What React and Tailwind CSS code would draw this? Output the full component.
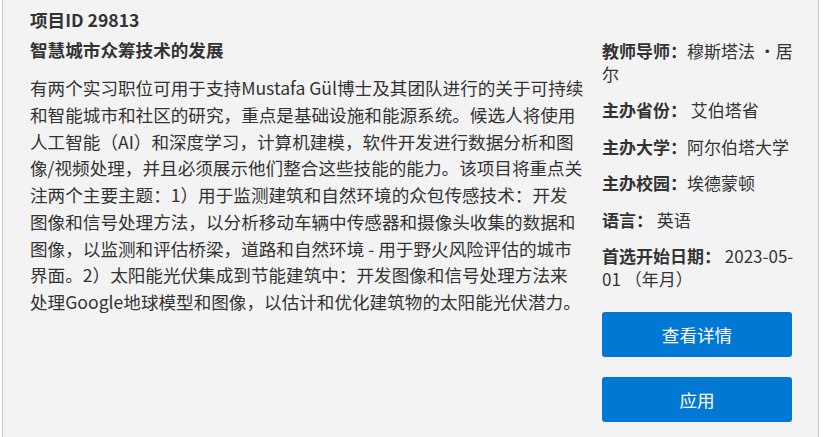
import React from 'react';

const project = {
  id: 29813,
  title: '智慧城市众筹技术的发展',
  // lines kept as in the source layout
  description: [
    '有两个实习职位可用于支持Mustafa Gül博士及其团队进行的关于可持续',
    '和智能城市和社区的研究，重点是基础设施和能源系统。候选人将使用',
    '人工智能（AI）和深度学习，计算机建模，软件开发进行数据分析和图',
    '像/视频处理，并且必须展示他们整合这些技能的能力。该项目将重点关',
    '注两个主要主题：1）用于监测建筑和自然环境的众包传感技术：开发',
    '图像和信号处理方法，以分析移动车辆中传感器和摄像头收集的数据和',
    '图像，以监测和评估桥梁，道路和自然环境 - 用于野火风险评估的城市',
    '界面。2）太阳能光伏集成到节能建筑中：开发图像和信号处理方法来',
    '处理Google地球模型和图像，以估计和优化建筑物的太阳能光伏潜力。',
  ],
};

// label / value pairs shown in the side column
const details = [
  { label: '教师导师：', value: ['穆斯塔法 ·居', '尔'] },
  { label: '主办省份：', value: [' 艾伯塔省'] },
  { label: '主办大学：', value: ['阿尔伯塔大学'] },
  { label: '主办校园：', value: ['埃德蒙顿'] },
  { label: '语言：', value: [' 英语'] },
  { label: '首选开始日期：', value: [' 2023-05-', '01 （年月）'] },
];

export default function App() {
  return (
    <div className="min-h-screen bg-white">
      <div className="ml-[2px] w-[817px] h-[437px] border-x border-[#c8c8c8] bg-[#f3f3f3] pl-[27px] pr-[26px] pt-[7px] font-['Noto_Sans_CJK_SC',sans-serif] text-[#333333]">
        <h1 className="text-[17.6px] leading-[26.7px] font-bold mb-[3px]">项目ID {project.id}</h1>

        <div className="flex gap-[20px]">
          {/* left: title + description */}
          <div className="flex-1 min-w-0">
            <h2 className="text-[17.6px] leading-[26.7px] font-bold">{project.title}</h2>
            <p className="mt-[11.6px] text-[17.6px] leading-[26.75px] whitespace-nowrap">
              {project.description.map((line, i) => (
                <React.Fragment key={i}>
                  {line}
                  {i < project.description.length - 1 && <br />}
                </React.Fragment>
              ))}
            </p>
          </div>

          {/* right: details + actions */}
          <div className="w-[190px] pt-[2px] text-[17px] leading-[23px]">
            {details.map(d => (
              <div key={d.label} className="mb-[13.5px] whitespace-pre">
                <span className="font-bold">{d.label}</span>
                {d.value[0]}
                {d.value[1] && (
                  <>
                    <br />
                    {d.value[1]}
                  </>
                )}
              </div>
            ))}
            <div className="mt-[22px] flex flex-col gap-[20px]">
              <button className="h-[45px] w-full rounded-[3px] bg-[#0078d4] text-[17.6px] text-white">查看详情</button>
              <button className="h-[45px] w-full rounded-[3px] bg-[#0078d4] text-[17.6px] text-white">应用</button>
            </div>
          </div>
        </div>
      </div>
    </div>
  );
}
